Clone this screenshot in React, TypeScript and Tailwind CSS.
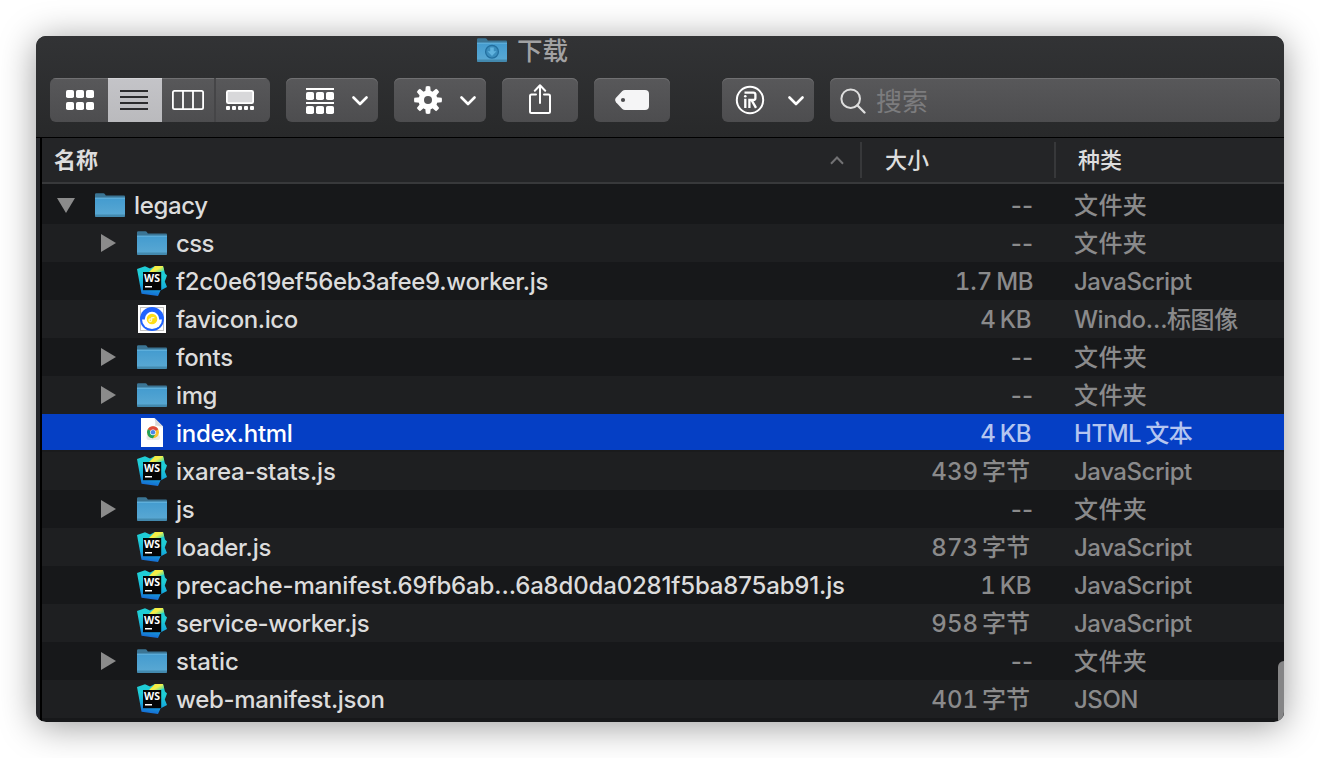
import type { ReactNode } from 'react';

type Kind = 'folder' | 'ws' | 'favicon' | 'chrome';

interface Entry {
  name: string;
  kind: Kind;
  size: string;
  unit?: string;
  type: string;
  tracking: string;
  open?: boolean;
  root?: boolean;
  selected?: boolean;
}

const entries: Entry[] = [
  { name: 'legacy', kind: 'folder', size: '--', type: '文件夹', open: true, root: true, tracking: 'tracking-[-0.35px]' },
  { name: 'css', kind: 'folder', size: '--', type: '文件夹', tracking: 'tracking-[-0.6px]' },
  { name: 'f2c0e619ef56eb3afee9.worker.js', kind: 'ws', size: '1.7', unit: 'MB', type: 'JavaScript', tracking: 'tracking-[-0.31px]' },
  { name: 'favicon.ico', kind: 'favicon', size: '4', unit: 'KB', type: 'Windo…标图像', tracking: 'tracking-[-0.4px]' },
  { name: 'fonts', kind: 'folder', size: '--', type: '文件夹', tracking: 'tracking-[-0.3px]' },
  { name: 'img', kind: 'folder', size: '--', type: '文件夹', tracking: 'tracking-[-0.4px]' },
  { name: 'index.html', kind: 'chrome', size: '4', unit: 'KB', type: 'HTML 文本', selected: true, tracking: 'tracking-[-0.3px]' },
  { name: 'ixarea-stats.js', kind: 'ws', size: '439', unit: '字节', type: 'JavaScript', tracking: 'tracking-[-0.22px]' },
  { name: 'js', kind: 'folder', size: '--', type: '文件夹', tracking: 'tracking-[-0.3px]' },
  { name: 'loader.js', kind: 'ws', size: '873', unit: '字节', type: 'JavaScript', tracking: 'tracking-[-0.25px]' },
  { name: 'precache-manifest.69fb6ab…6a8d0da0281f5ba875ab91.js', kind: 'ws', size: '1', unit: 'KB', type: 'JavaScript', tracking: 'tracking-[-0.17px]' },
  { name: 'service-worker.js', kind: 'ws', size: '958', unit: '字节', type: 'JavaScript', tracking: 'tracking-[-0.41px]' },
  { name: 'static', kind: 'folder', size: '--', type: '文件夹', tracking: 'tracking-[0px]' },
  { name: 'web-manifest.json', kind: 'ws', size: '401', unit: '字节', type: 'JSON', tracking: 'tracking-[-0.31px]' },
];

function FolderIcon({ download = false }: { download?: boolean }) {
  return (
    <svg width="30" height="24" viewBox="0 0 30 24" className="block shrink-0">
      <defs>
        <linearGradient id="folderFront" x1="0" y1="0" x2="0" y2="1">
          <stop offset="0" stopColor="#439bcf" />
          <stop offset="1" stopColor="#5ba9d3" />
        </linearGradient>
      </defs>
      <path d="M0 1.5Q0 0.2 1.3 0.2H8.4Q9.4 0.2 10 1.2L10.8 2.5H29Q30 2.5 30 3.5V8H0Z" fill="#3b7595" />
      <path d="M0 4.7H30V22.6Q30 24 28.7 24H1.3Q0 24 0 22.6Z" fill="url(#folderFront)" />
      <path d="M0 4.7H30V5.6H0Z" fill="#70bce3" />
      <path d="M0 21.6H30V22.6Q30 24 28.7 24H1.3Q0 24 0 22.6Z" fill="#4389ae" />
      {download && (
        <g>
          <circle cx="15" cy="13.7" r="6.4" fill="#3a8dbd" stroke="#236f9f" strokeWidth="1.3" />
          <path d="M13.2 9.5h3.6v3.8h2.7L15 18l-4.5-4.7h2.7Z" fill="#5fb2de" />
        </g>
      )}
    </svg>
  );
}

function WebStormIcon() {
  return (
    <svg width="30" height="30" viewBox="0 0 30 30" className="block shrink-0">
      <defs>
        <linearGradient id="wsBody" x1="0.6" y1="0" x2="0.45" y2="1">
          <stop offset="0.35" stopColor="#1fcdd6" />
          <stop offset="0.65" stopColor="#16aedb" />
          <stop offset="1" stopColor="#1668d4" />
        </linearGradient>
        <linearGradient id="wsTop" x1="0" y1="0" x2="1" y2="0.7">
          <stop offset="0.25" stopColor="#fbe93a" />
          <stop offset="0.6" stopColor="#f3f04a" />
          <stop offset="1" stopColor="#4ddba0" />
        </linearGradient>
      </defs>
      <path d="M0 3L8 0.2L13 2.5L18 0H26L28 7.5L30 9.5L27.8 15.5L30 21L23.5 24.5L21 30L4.5 27.8Z" fill="url(#wsBody)" />
      <path d="M18 0H26L27.2 4.5L21 6.5H11.5Z" fill="url(#wsTop)" />
      <rect x="6" y="6" width="18.2" height="18.2" fill="#050505" />
      <text x="7" y="16" textLength="16" lengthAdjust="spacingAndGlyphs" fontSize="10.4" fontWeight="700" fill="#fff" className="font-['Open_Sans',sans-serif]">WS</text>
      <rect x="8" y="20" width="7" height="1.5" fill="#fff" />
    </svg>
  );
}

function FaviconIcon() {
  return (
    <svg width="28" height="28" viewBox="0 0 28 28" className="block shrink-0">
      <rect width="28" height="28" fill="#fff" />
      <rect x="2.5" y="2.5" width="23" height="23" fill="#fff" stroke="#c2c2c2" />
      <circle cx="14" cy="14" r="12" fill="#1f63ff" />
      <path d="M4 14.5H24A10 9.6 0 0 1 4 14.5Z" fill="#fff" />
      <circle cx="14" cy="14" r="7.2" fill="#fff" />
      <circle cx="14" cy="14" r="5.3" fill="#ffde17" />
      <path d="M13.6 15.3A1.3 1.3 0 1 1 13.6 15.2L13.8 12.6H16.4" fill="none" stroke="#fff7c8" strokeWidth="1.3" />
    </svg>
  );
}

function ChromeFileIcon() {
  return (
    <svg width="22" height="29" viewBox="0 0 22 29" className="block shrink-0">
      <path d="M0 0H13.5L22 8.5V29H0Z" fill="#fff" />
      <path d="M13.5 0Q15 5 14.2 7.8Q18 7.4 22 8.5Z" fill="#d9d9d9" />
      <path d="M14 7.5L22 8.5V10Q18 8 14 7.5Z" fill="#efefef" />
      <rect x="5.5" y="17" width="13.5" height="5" rx="2" fill="#e9e9e9" />
      <circle cx="12" cy="14.3" r="6" fill="#f9c22e" />
      <path d="M12 14.3L6.8 11.3A6 6 0 0 1 17.2 11.3Z" fill="#dd4b3e" />
      <path d="M12 14.3L6.8 11.3A6 6 0 0 0 12 20.3L14.6 15.8Z" fill="#1fa15d" />
      <path d="M12 11.3H17.2L15 12.5Z" fill="#dd4b3e" />
      <circle cx="12" cy="14.3" r="2.9" fill="#fff" />
      <circle cx="12" cy="14.3" r="2.3" fill="#4a86e8" />
    </svg>
  );
}

function Chevron() {
  return (
    <svg width="16" height="10" viewBox="0 0 16 10" className="mt-[2px] block">
      <path d="M1.5 1.5L8 8L14.5 1.5" fill="none" stroke="#fff" strokeWidth="2.6" strokeLinecap="round" strokeLinejoin="round" />
    </svg>
  );
}

const dots = [0, 10, 20];

function GridIcon() {
  return (
    <svg width="28" height="20" viewBox="0 0 28 20" fill="#fff">
      {dots.map((x) => (
        <g key={x}>
          <rect x={x} y="0" width="8" height="8" rx="1.8" />
          <rect x={x} y="12" width="8" height="8" rx="1.8" />
        </g>
      ))}
    </svg>
  );
}

function ListIcon() {
  return (
    <svg width="28" height="20" viewBox="0 0 28 20" fill="#2b2b2d">
      <path d="M0 0h28v2H0zM0 6h28v2H0zM0 12h28v2H0zM0 18h28v2H0z" />
    </svg>
  );
}

function ColumnsIcon() {
  return (
    <svg width="32" height="20" viewBox="0 0 32 20" fill="none" stroke="#fff" strokeWidth="1.8">
      <rect x="0.9" y="0.9" width="30.2" height="18.2" rx="1.6" />
      <path d="M11 1V19M21 1V19" />
    </svg>
  );
}

function GalleryIcon() {
  return (
    <svg width="28" height="20" viewBox="0 0 28 20">
      <rect x="0.9" y="0.9" width="26.2" height="12.2" rx="1.4" fill="#d8d8da" stroke="#fff" strokeWidth="1.8" />
      {[0, 6, 12, 18, 24].map((x) => (
        <rect key={x} x={x} y="16" width="4" height="4" rx="1" fill="#fff" />
      ))}
    </svg>
  );
}

function ArrangeIcon() {
  return (
    <svg width="28" height="26" viewBox="0 0 28 26" fill="#fff" className="mt-[2px]">
      <path d="M0 0h28v2H0zM0 14h28v2H0z" />
      {dots.map((x) => (
        <g key={x}>
          <rect x={x} y="4" width="8" height="8" rx="1.8" />
          <rect x={x} y="18" width="8" height="8" rx="1.8" />
        </g>
      ))}
    </svg>
  );
}

function GearIcon() {
  return (
    <svg width="28" height="28" viewBox="-14 -14 28 28" fill="#fff">
      {[0, 45, 90, 135].map((a) => (
        <path key={a} d="M-2.2 -13.6Q0 -14.3 2.2 -13.6L3 -6V6L2.2 13.6Q0 14.3 -2.2 13.6L-3 6V-6Z" transform={`rotate(${a})`} />
      ))}
      <circle r="9.6" />
      <circle r="4" fill="#565658" />
    </svg>
  );
}

function ShareIcon() {
  return (
    <svg width="22" height="30" viewBox="0 0 22 30" fill="none" stroke="#fff" strokeWidth="2" strokeLinecap="round" strokeLinejoin="round">
      <path d="M7 10.5H2.5Q1 10.5 1 12V27.5Q1 29 2.5 29H19.5Q21 29 21 27.5V12Q21 10.5 19.5 10.5H15" />
      <path d="M11 19V1.5M5.8 6.8L11 1.3L16.2 6.8" />
    </svg>
  );
}

function TagIcon() {
  return (
    <svg width="34" height="20" viewBox="0 0 34 20">
      <path d="M10 0H30Q34 0 34 4V16Q34 20 30 20H10Q8.5 20 7.3 18.9L1 12.2Q-0.7 10 1 7.8L7.3 1.1Q8.5 0 10 0Z" fill="#f5f5f6" />
      <circle cx="8" cy="10" r="2.1" fill="#4c4c4e" />
    </svg>
  );
}

function RegisteredIcon() {
  return (
    <svg width="30" height="30" viewBox="0 0 30 30" fill="none" stroke="#fff">
      <circle cx="15" cy="15" r="13.2" strokeWidth="2" />
      <path d="M9.5 7.6H18.4Q20.4 7.6 20.4 9.6V13Q20.4 15 18.4 15H14.4V23" strokeWidth="2.3" />
      <path d="M16.5 15L21 22.8" strokeWidth="2.4" />
      <path d="M10.3 13.8V23" strokeWidth="2.3" />
      <circle cx="10.3" cy="11.2" r="1.3" fill="#fff" stroke="none" />
    </svg>
  );
}

function SearchIcon() {
  return (
    <svg width="26" height="26" viewBox="0 0 26 26" fill="none" stroke="#dedede" strokeWidth="2" className="mt-[2px]">
      <circle cx="10.7" cy="10.7" r="9.3" />
      <path d="M17.3 17.3L24.5 24.5" strokeLinecap="round" strokeWidth="2.3" />
    </svg>
  );
}

const face = 'flex h-11 items-center bg-gradient-to-b from-[#58585a] to-[#4d4d4f] shadow-[inset_0_1px_0_#707072]';

function ToolButton({ className, children }: { className: string; children: ReactNode }) {
  return <div className={`${face} rounded-[6px] ${className}`}>{children}</div>;
}

function Toolbar() {
  return (
    <div className="h-[102px] shrink-0 border-b border-black bg-gradient-to-b from-[#323335] to-[#28292a]">
      <div className="flex h-[42px] items-start gap-[10px] pl-[441px] pt-[2px]">
        <FolderIcon download />
        <span className="text-[25.5px] font-medium leading-[26px] text-[#a2a2a3]">下载</span>
      </div>
      <div className="flex pl-[14px]">
        <div className="flex overflow-hidden rounded-[6px]">
          <div className={`${face} w-[58px] justify-center pl-px`}><GridIcon /></div>
          <div className="flex h-11 w-[54px] items-center bg-gradient-to-b from-[#c4c4c8] to-[#bababd] pl-3 shadow-[inset_0_1px_0_#d4d4d7]"><ListIcon /></div>
          <div className={`${face} w-[52px] justify-center`}><ColumnsIcon /></div>
          <div className="h-11 w-[2px] bg-[#454547]" />
          <div className={`${face} w-[54px] pl-[10px]`}><GalleryIcon /></div>
        </div>
        <ToolButton className="ml-4 w-[92px] gap-[18px] pl-5"><ArrangeIcon /><Chevron /></ToolButton>
        <ToolButton className="ml-4 w-[92px] gap-[18px] pl-5"><GearIcon /><Chevron /></ToolButton>
        <ToolButton className="ml-4 w-[76px] justify-center pb-[2px]"><ShareIcon /></ToolButton>
        <ToolButton className="ml-4 w-[76px] justify-center"><TagIcon /></ToolButton>
        <ToolButton className="ml-[52px] w-[92px] gap-[23px] pl-[13px]"><RegisteredIcon /><Chevron /></ToolButton>
        <ToolButton className="ml-4 w-[450px] gap-[10px] pl-[10px]">
          <SearchIcon />
          <span className="pt-[3px] text-[26px] leading-[30px] text-[#7c7c7e]">搜索</span>
        </ToolButton>
      </div>
    </div>
  );
}

function ColumnHeader() {
  return (
    <div className="flex h-[46px] shrink-0 items-center border-b-2 border-[#38393b] bg-[#242527] text-[22px] text-[#dddddd]">
      <span className="w-[788px] pl-3 font-bold">名称</span>
      <svg width="14" height="9" viewBox="0 0 14 9" className="mr-4 block">
        <path d="M1 7.8L7 1.5L13 7.8" fill="none" stroke="#717173" strokeWidth="2" />
      </svg>
      <div className="h-9 w-[2px] bg-[#37383a]" />
      <span className="w-[192px] pl-[23px] font-medium">大小</span>
      <div className="h-9 w-[2px] bg-[#37383a]" />
      <span className="pl-[22px] font-medium">种类</span>
    </div>
  );
}

function EntryIcon({ kind }: { kind: Kind }) {
  if (kind === 'folder') return <FolderIcon />;
  if (kind === 'ws') return <WebStormIcon />;
  if (kind === 'favicon') return <FaviconIcon />;
  return <ChromeFileIcon />;
}

function Triangle({ open }: { open?: boolean }) {
  return open ? (
    <svg width="18" height="15" viewBox="0 0 18 15"><path d="M0 0H18L9 15Z" fill="#8b8b8b" /></svg>
  ) : (
    <svg width="15" height="18" viewBox="0 0 15 18"><path d="M0 0L15 9L0 18Z" fill="#8b8b8b" /></svg>
  );
}

const unitInset: Record<string, string> = { MB: 'pr-px', KB: 'pr-[3px]', 字节: 'pr-1' };

function Row({ entry, index }: { entry: Entry; index: number }) {
  const stripe = index % 2 === 0 ? 'bg-[#17181a]' : 'bg-[#1e1f21]';
  const dim = entry.selected ? 'text-[#b4c5f0]' : 'text-[#8a8a8b]';
  const bg = entry.selected ? 'bg-[#053fc5] border-b-2 border-[#1a1b1d]' : stripe;
  const drop = entry.selected ? 'pt-[3px]' : 'pt-[2px]';
  const inset = entry.unit ? unitInset[entry.unit] : 'pr-px';
  const kindTracking = entry.type === '文件夹' ? 'tracking-[0.4px]' : 'tracking-[-0.45px]';
  return (
    <div className={`flex h-[38px] shrink-0 items-center text-[24px] font-[450] leading-[34px] ${bg}`}>
      <div className={entry.root ? 'flex w-[52px] pl-[15px]' : 'flex w-[94px] pl-[59px]'}>
        {entry.kind === 'folder' && <Triangle open={entry.open} />}
      </div>
      <div className="flex w-[32px] justify-center"><EntryIcon kind={entry.kind} /></div>
      <div className={`whitespace-pre pl-2 ${drop} ${entry.root ? 'w-[750px]' : 'w-[708px]'} ${entry.selected ? 'text-white' : 'text-[#dcdcdc]'} ${entry.tracking}`}>{entry.name}</div>
      <div className={`flex w-[158px] justify-end gap-[4px] ${drop} ${inset} ${dim}`}>
        <span className={entry.unit ? 'tabular-nums' : ''}>{entry.size}</span>
        {entry.unit && <span className={entry.unit === '字节' ? '' : 'tracking-[-0.5px]'}>{entry.unit}</span>}
      </div>
      <div className={`flex gap-[4px] whitespace-pre pl-10 ${drop} ${kindTracking} ${dim}`}>
        {entry.type.split(' ').map((part) => <span key={part}>{part}</span>)}
      </div>
    </div>
  );
}

export default function App() {
  return (
    <div className="h-[758px] w-[1320px] overflow-hidden bg-white p-9 font-[Inter,'Noto_Sans_CJK_SC',sans-serif]">
      <div className="rounded-[10px] shadow-[0_4px_36px_rgba(0,0,0,0.4)]">
        <div className="relative flex h-[686px] w-[1248px] flex-col overflow-hidden rounded-[10px] bg-[#17181a]">
          <Toolbar />
          <div className="flex min-h-0 flex-1">
            <div className="w-1 bg-[#242529]" />
            <div className="w-[2px] bg-black" />
            <div className="flex flex-1 flex-col">
              <ColumnHeader />
              <div className="h-[2px] shrink-0 bg-[#17181a]" />
              {entries.map((entry, i) => <Row key={entry.name} entry={entry} index={i} />)}
            </div>
          </div>
          <div className="absolute bottom-0 right-0 h-[61px] w-[6px] rounded-tl-[6px] bg-[#858586]" />
        </div>
      </div>
    </div>
  );
}
